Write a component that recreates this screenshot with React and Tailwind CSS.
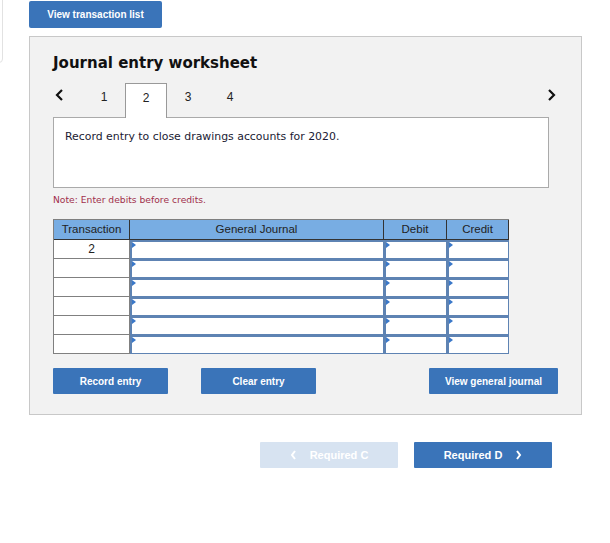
import React from "react";

const Chevron = ({ dir = "left", className = "", color = "#111", w = 9, h = 12, sw = 2.2 }) => (
  <svg width={w} height={h} viewBox={`0 0 ${w} ${h}`} className={className}>
    {dir === "left" ? (
      <polyline points={`${w - 2},1 2,${h / 2} ${w - 2},${h - 1}`} fill="none" stroke={color} strokeWidth={sw} />
    ) : (
      <polyline points={`2,1 ${w - 2},${h / 2} 2,${h - 1}`} fill="none" stroke={color} strokeWidth={sw} />
    )}
  </svg>
);

const InputCell = () => (
  <div className="bg-[#5e83b3] pt-[2px] pl-[2px] pb-[1px] pr-[1px]">
    <div className="relative h-full bg-white">
      <span className="absolute left-0 top-0 h-0 w-0 border-y-[3px] border-y-transparent border-l-[4px] border-l-[#3a78c9]" />
    </div>
  </div>
);

export default function App() {
  const rows = [0, 1, 2, 3, 4, 5];
  const sans = { fontFamily: '"Liberation Sans", Arial, sans-serif' };
  const verd = { fontFamily: '"DejaVu Sans", Verdana, sans-serif' };
  return (
    <div className="relative h-[543px] w-[610px] overflow-hidden bg-white" style={sans}>
      <div className="absolute left-[-10px] top-[-10px] h-[73px] w-[13px] rounded-br-[4px] border border-[#e2e2e2]" />

      <div className="pl-[29px] pt-[1px]">
        <button className="h-[27px] w-[133px] rounded-[2px] bg-[#3a74b9] text-[10px] font-bold text-white">
          View transaction list
        </button>
      </div>

      <div className="ml-[29px] mt-[8px] h-[379px] w-[553px] border border-[#c8c8c8] bg-[#f2f2f2] pl-[23px]">
        <div className="mt-[17px] h-[18px] text-[15px] font-bold leading-[18px] text-[#111]" style={verd}>
          Journal entry worksheet
        </div>

        <div className="mt-[11px] flex h-[35px] w-[504px] items-start text-[12px] text-[#222]">
          <div className="flex w-[30px] justify-start pl-[2px] pt-[6px]">
            <Chevron dir="left" />
          </div>
          {[1, 2, 3, 4].map((n) => (
            <div
              key={n}
              className={`relative z-10 h-[35px] w-[42px] text-center leading-[28px] ${
                n === 2 ? "border-x border-t border-[#999] bg-white" : ""
              }`}
            >
              {n}
            </div>
          ))}
          <div className="flex-1" />
          <div className="flex w-[12px] justify-center pt-[6px]">
            <Chevron dir="right" />
          </div>
        </div>

        <div
          className="-mt-px h-[71px] w-[496px] border border-[#aaa] bg-white px-[11px] pt-[12px] text-[10.9px] leading-[14px] text-[#1a1a33]"
          style={verd}
        >
          Record entry to close drawings accounts for 2020.
        </div>

        <div className="mt-[5px] h-[14px] text-[9.2px] leading-[14px] text-[#a1304c]" style={verd}>
          Note: Enter debits before credits.
        </div>

        <div className="mt-[12px] w-[456px] border-l border-t border-[#7f7f7f]">
          <div className="grid h-[20px] grid-cols-[76px_254px_63px_62px] bg-[#78ade3] text-[11.5px] leading-[19px] text-[#222]">
            <div className="border-b border-r border-[#333] text-center">Transaction</div>
            <div className="border-b border-r border-[#333] text-center">General Journal</div>
            <div className="border-b border-r border-[#333] text-center">Debit</div>
            <div className="border-b border-r border-[#333] text-center">Credit</div>
          </div>
          {rows.map((r) => (
            <div key={r} className="grid h-[19px] grid-cols-[76px_254px_63px_62px]">
              <div className="border-b border-r border-[#808080] bg-white text-center text-[12px] leading-[18px] text-[#222]">
                {r === 0 ? "2" : ""}
              </div>
              <InputCell />
              <InputCell />
              <InputCell />
            </div>
          ))}
        </div>

        <div className="mt-[14px] flex w-[505px] text-[10px] font-bold text-white">
          <button className="h-[26px] w-[115px] rounded-[1px] bg-[#3a74b9]">Record entry</button>
          <button className="ml-[33px] h-[26px] w-[115px] rounded-[1px] bg-[#3a74b9]">Clear entry</button>
          <button className="ml-auto h-[26px] w-[129px] rounded-[1px] bg-[#3a74b9]">View general journal</button>
        </div>
      </div>

      <div className="mt-[27px] flex pl-[260px] text-[11px] font-bold text-white">
        <button className="flex h-[26px] w-[138px] items-center justify-center gap-[13px] rounded-[1px] bg-[#d7e3f1]">
          <Chevron dir="left" color="#fff" w={7} h={10} sw={2} />
          <span>Required C</span>
        </button>
        <button className="ml-[16px] flex h-[26px] w-[138px] items-center justify-center gap-[13px] rounded-[1px] bg-[#3a74b9]">
          <span>Required D</span>
          <Chevron dir="right" color="#fff" w={7} h={10} sw={2} />
        </button>
      </div>
    </div>
  );
}
